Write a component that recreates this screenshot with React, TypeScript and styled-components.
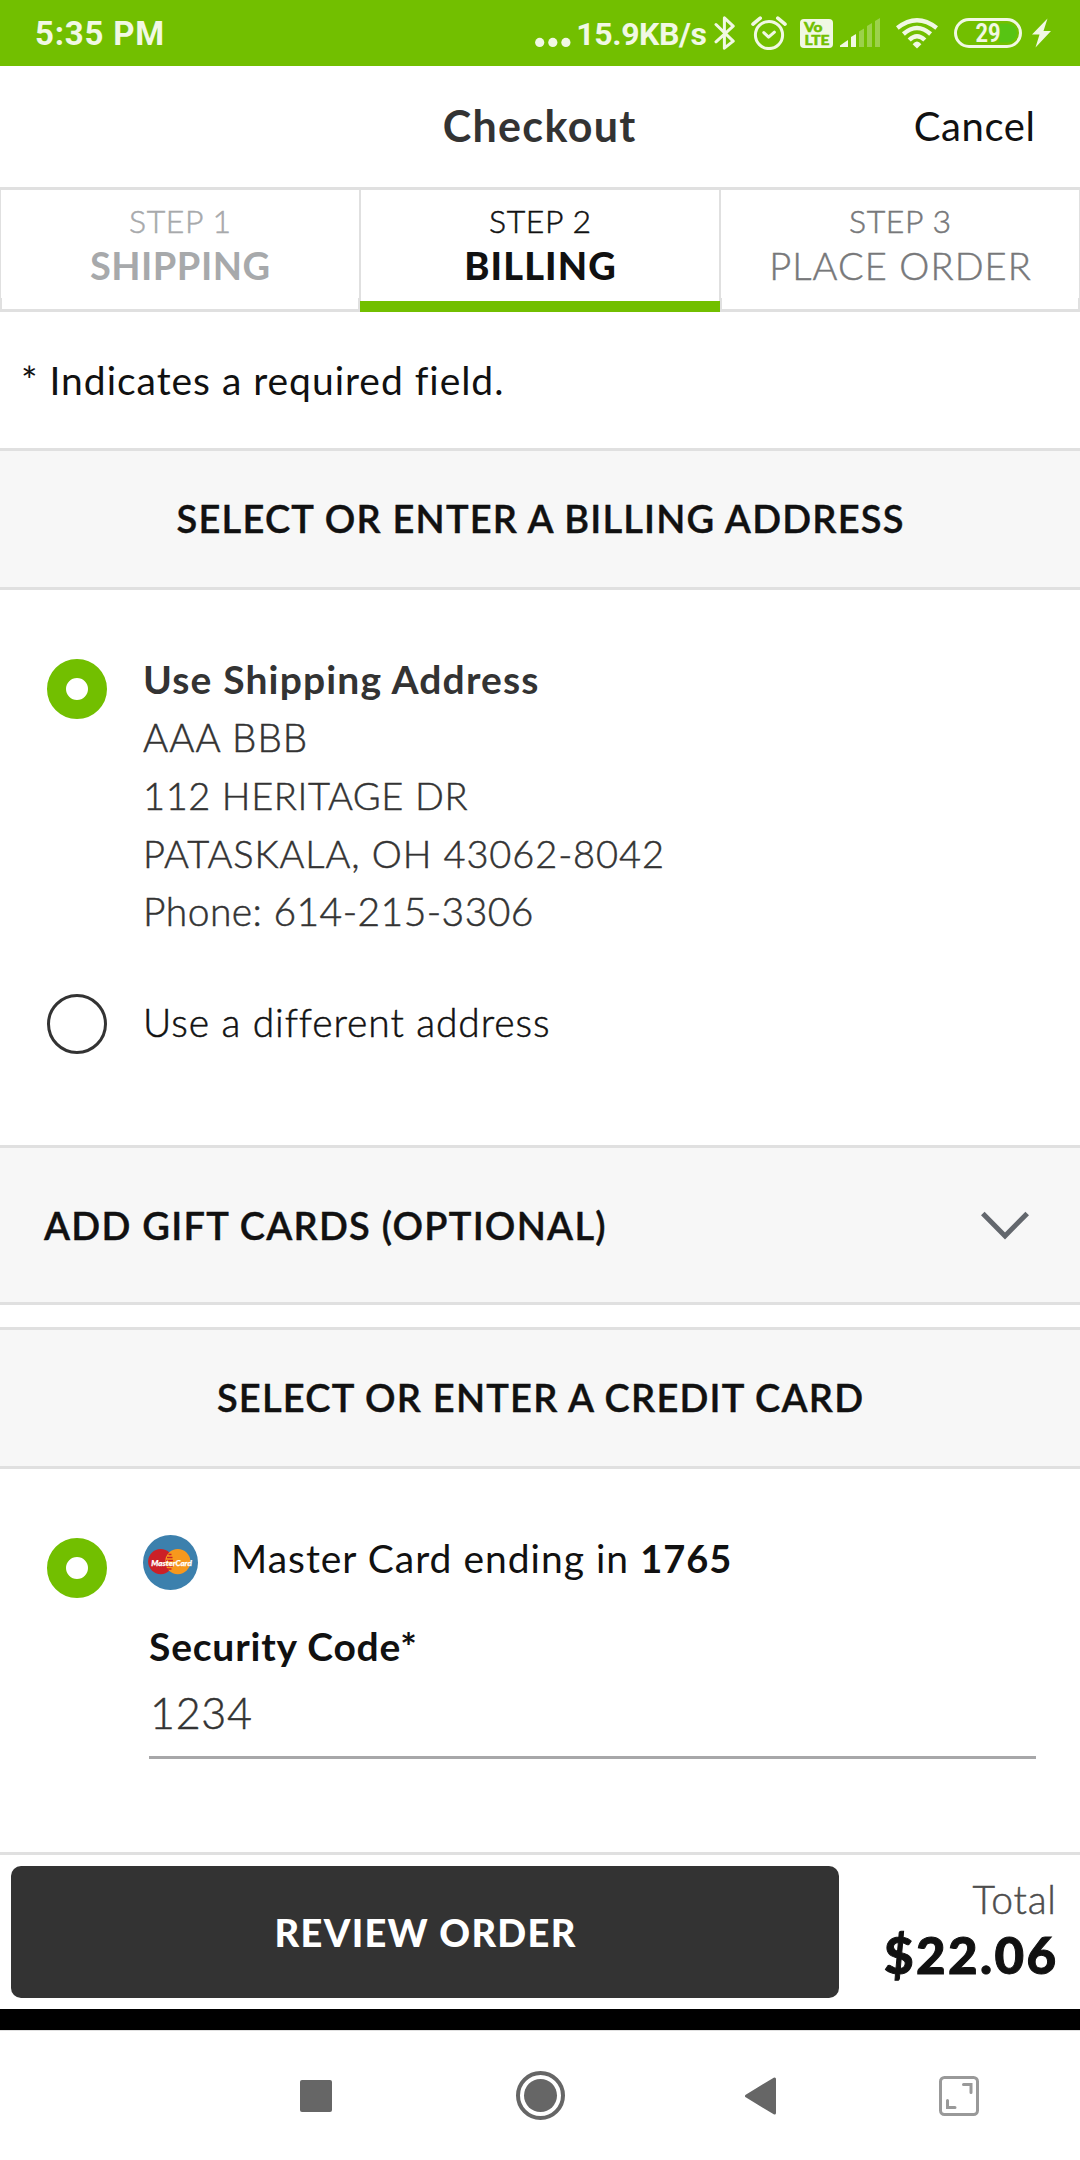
import React from "react";
import styled, { createGlobalStyle, css } from "styled-components";

const green = "#72bf00";
const ink = "#111111";
const charcoal = "#333333";
const rule = "#e0e0e0";
const statusInk = "#f1f8e4";

const GlobalStyle = createGlobalStyle`
  * { box-sizing: border-box; }
  body { margin: 0; background: #fff; }
  svg { display: block; flex: none; }
`;

const Screen = styled.div`
  width: 1080px;
  height: 2160px;
  display: flex;
  flex-direction: column;
  overflow: hidden;
  background: #fff;
  color: ${ink};
  font-family: Lato, "Open Sans", sans-serif;
`;

type LabelProps = {
  $size?: number;
  $weight?: number;
  $track?: number;
  $color?: string;
  $line?: number;
};

/* The light cut is very fine at these sizes, so it gets a hairline stroke. */
const Label = styled.span<LabelProps>`
  display: block;
  flex: none;
  white-space: nowrap;
  font-size: ${(p) => p.$size ?? 38}px;
  font-weight: ${(p) => p.$weight ?? 400};
  letter-spacing: ${(p) => p.$track ?? 0}px;
  margin-right: ${(p) => -(p.$track ?? 0)}px;
  line-height: ${(p) => p.$line ?? 48}px;
  color: ${(p) => p.$color ?? "inherit"};
  ${(p) =>
    p.$weight === 300 &&
    css`
      -webkit-text-stroke: 0.5px currentColor;
    `}
`;

/* Status bar */
const StatusBar = styled.header`
  flex: none;
  height: 66px;
  padding: 0 29px 0 35px;
  display: flex;
  align-items: center;
  justify-content: space-between;
  background: ${green};
  color: ${statusInk};
`;

const StatusText = styled(Label)`
  padding-top: 2px;
  font-family: Roboto, sans-serif;
`;

const StatusIcons = styled.div`
  display: flex;
  align-items: center;
`;

const NetSpeed = styled(StatusText)`
  margin-left: 5px;
`;

const StatusIcon = styled.svg<{ $gap?: number }>`
  margin-left: ${(p) => p.$gap ?? 0}px;
  fill: none;
  stroke: none;
`;

/* Title bar */
const TitleBar = styled.div`
  flex: none;
  height: 121px;
  padding: 0 45px 2px 43px;
  display: grid;
  grid-template-columns: 1fr auto 1fr;
  align-items: center;
`;

const CancelLink = styled(Label)`
  grid-column: 3;
  justify-self: end;
`;

const Title = styled(Label)`
  grid-column: 2;
`;

/* Steps */
const Steps = styled.nav`
  flex: none;
  height: 125px;
  display: grid;
  grid-template-columns: repeat(3, 1fr);
  border-top: 3px solid ${rule};
`;

const Step = styled.div<{ $active?: boolean; $color: string }>`
  position: relative;
  display: flex;
  flex-direction: column;
  align-items: center;
  padding-top: 11px;
  border: solid ${rule};
  border-width: 0 1px;
  color: ${(p) => p.$color};

  &::after {
    content: "";
    position: absolute;
    left: -1px;
    right: -1px;
    bottom: 0;
    height: 11px;
    ${(p) =>
      p.$active
        ? css`
            background: ${green};
          `
        : css`
            border: solid ${rule};
            border-width: 0 2px 3px;
          `}
  }
`;

const Note = styled.div`
  flex: none;
  height: 136px;
  padding: 0 21px 1px;
  display: flex;
  align-items: center;
`;

/* Section headings */
const SectionHead = styled.div`
  flex: none;
  height: 142px;
  padding-bottom: 2px;
  display: flex;
  align-items: center;
  justify-content: center;
  background: #f7f7f7;
  border: solid ${rule};
  border-width: 3px 0;
`;

const HeadText = styled(Label)`
  -webkit-text-stroke: 0.4px currentColor;
`;

const Accordion = styled(SectionHead)`
  height: 160px;
  margin-bottom: 22px;
  padding: 0 51px 1px 44px;
  justify-content: space-between;
`;

const Chevron = styled.svg`
  margin-top: 2px;
`;

/* Options */
const Options = styled.section<{ $height: number }>`
  flex: none;
  height: ${(p) => p.$height}px;
  padding: 60px 44px 0 47px;
`;

const Option = styled.div<{ $top?: number }>`
  display: flex;
  align-items: flex-start;
  margin-top: ${(p) => p.$top ?? 0}px;
`;

const Radio = styled.span<{ $checked?: boolean; $top: number }>`
  flex: none;
  width: 60px;
  height: 60px;
  margin: ${(p) => p.$top}px 36px 0 0;
  border-radius: 50%;
  background: #fff;
  border: ${(p) => (p.$checked ? `19px solid ${green}` : `3px solid ${charcoal}`)};
`;

const Lines = styled.div`
  display: flex;
  flex-direction: column;
`;

const CardLogo = styled.svg`
  margin: 6px 33px 0 0;
`;

const CardEnding = styled(Label)`
  margin-left: 12px;
`;

const Field = styled.div`
  display: flex;
  flex-direction: column;
  margin: 24px 0 0 102px;
`;

const FieldValue = styled.div`
  height: 76px;
  margin-top: 13px;
  padding-left: 1px;
  border-bottom: 3px solid #a7a7a9;
`;

/* Footer */
const Footer = styled.footer`
  flex: none;
  height: 157px;
  padding: 11px 24px 11px 11px;
  display: flex;
  justify-content: space-between;
  border-top: 3px solid ${rule};
`;

const ReviewButton = styled.button`
  width: 828px;
  height: 132px;
  padding: 0;
  display: flex;
  align-items: center;
  justify-content: center;
  border: 0;
  border-radius: 10px;
  background: ${charcoal};
  color: #fff;
  font-family: inherit;
`;

const Totals = styled.div`
  display: flex;
  flex-direction: column;
  align-items: flex-end;
  padding-top: 10px;
`;

const Amount = styled(Label)`
  padding-top: 3px;
  -webkit-text-stroke: 1px currentColor;
`;

const BlackStrip = styled.div`
  flex: none;
  height: 21px;
  background: #000;
`;

const NavBar = styled.nav`
  flex: 1;
  display: flex;
  align-items: center;
  padding-left: 300px;
  border-top: 1px solid ${rule};
`;

const NavIcon = styled.svg<{ $gap?: number }>`
  margin-left: ${(p) => p.$gap ?? 0}px;
`;

const address: { text: string; size: number; track: number }[] = [
  { text: "AAA BBB", size: 38.5, track: 1.05 },
  { text: "112 HERITAGE DR", size: 38, track: 0.6 },
  { text: "PATASKALA, OH 43062-8042", size: 38, track: 0.9 },
  { text: "Phone: 614-215-3306", size: 39, track: 0.45 },
];

function Status() {
  return (
    <StatusBar>
      <StatusText $size={33} $weight={700} $track={0.8}>5:35 PM</StatusText>
      <StatusIcons>
        <StatusIcon width="36" height="34" viewBox="535.5 16 36 34">
          <g fill={statusInk}>
            <circle cx="540.2" cy="42.4" r="4.6" />
            <circle cx="553.3" cy="42.4" r="4.6" />
            <circle cx="566.4" cy="42.4" r="4.6" />
          </g>
        </StatusIcon>
        <NetSpeed $size={32} $weight={700} $track={-0.4}>15.9KB/s</NetSpeed>
        <StatusIcon $gap={7} width="21" height="34" viewBox="714 16 21 34">
          <path d="M716 24.5L733.2 41.2L724.4 48.2V17.8L733.2 26.2L716 41.8" stroke={statusInk} strokeWidth="3" strokeLinecap="round" strokeLinejoin="round" />
        </StatusIcon>
        <StatusIcon $gap={16} width="36" height="34" viewBox="751 16 36 34">
          <g stroke={statusInk} strokeWidth="3" strokeLinecap="round" strokeLinejoin="round">
            <circle cx="769" cy="35" r="13.6" />
            <path d="M763.8 32.6L768.6 37.2L774.4 32.2" />
            <path d="M753 24.2L760.2 18.2M785 24.2L777.8 18.2" strokeWidth="3.6" />
          </g>
        </StatusIcon>
        <StatusIcon $gap={13} width="33" height="34" viewBox="800 16 33 34">
          <rect x="800" y="19" width="33" height="29" rx="4" fill={statusInk} />
          <g fill={green} stroke={green} strokeWidth="0.5" fontFamily="Lato, sans-serif" fontWeight="900">
            <text x="804" y="31.8" fontSize="13.5" textLength="18.5" lengthAdjust="spacingAndGlyphs">Vo</text>
            <text x="804.5" y="44.6" fontSize="13.5" textLength="25" lengthAdjust="spacingAndGlyphs">LTE</text>
          </g>
        </StatusIcon>
        <StatusIcon $gap={7} width="40" height="34" viewBox="840 16 40 34">
          <g fill={statusInk}>
            <path d="M840 47V45.5L848 40V47Z" />
            <path d="M851 47V37L856 34V47Z" />
            <g opacity="0.33">
              <path d="M859 47V31.5L864 28.5V47Z" />
              <path d="M867 47V26L872 23V47Z" />
              <path d="M875 47V21L880 18V47Z" />
            </g>
          </g>
        </StatusIcon>
        <StatusIcon $gap={16} width="42" height="34" viewBox="896 16 42 34">
          <g stroke={statusInk} strokeWidth="4.4">
            <path d="M897.3 28Q917 12.4 936.7 28" />
            <path d="M903.4 34Q917 22 930.6 34" />
            <path d="M909.2 40Q917 32.4 924.8 40" />
          </g>
          <path d="M912.6 44.2Q917 39 921.4 44.2L917 48.4Z" fill={statusInk} />
        </StatusIcon>
        <StatusIcon $gap={16} width="68" height="34" viewBox="954 16 68 34">
          <path d="M999 23.5H1007.5A9.5 9.5 0 0 1 1007.5 42.5H999Z" fill="#57c413" />
          <rect x="955.5" y="19.5" width="65" height="27" rx="13.5" stroke={statusInk} strokeWidth="3" />
          <text x="975.5" y="42" fontSize="25" fontWeight="700" fontFamily="Roboto, sans-serif" fill={statusInk} textLength="25" lengthAdjust="spacingAndGlyphs">29</text>
        </StatusIcon>
        <StatusIcon $gap={10} width="19" height="34" viewBox="1032 16 19 34">
          <path d="M1047.5 18.5L1032 34.5H1039.5L1035.5 47.5L1051 31H1043.5Z" fill={statusInk} />
        </StatusIcon>
      </StatusIcons>
    </StatusBar>
  );
}

function MasterCardLogo() {
  return (
    <CardLogo width="55" height="55" viewBox="0 0 55 55">
      <circle cx="27.5" cy="27.5" r="27.5" fill="#3c80ad" />
      <circle cx="17.7" cy="26.6" r="12.6" fill="#cc2027" />
      <circle cx="34.8" cy="26.6" r="12.6" fill="#f7981d" />
      <path d="M25.5 19.5H28.5M24 22.5H29.5M23 25.5H30M23 31H30M24 34H28.5" stroke="#cc2027" strokeWidth="1.3" />
      <text x="8.3" y="30.8" fontSize="8.2" fontWeight="900" fontStyle="italic" fontFamily="Lato, sans-serif" fill="#fff" stroke="#fff" strokeWidth="0.25" textLength="40.5" lengthAdjust="spacingAndGlyphs">MasterCard</text>
    </CardLogo>
  );
}

export default function App() {
  return (
    <Screen>
      <GlobalStyle />
      <Status />
      <TitleBar>
        <Title $size={43} $weight={700} $track={1.35} $color={charcoal}>Checkout</Title>
        <CancelLink $size={40} $track={0.6}>Cancel</CancelLink>
      </TitleBar>
      <Steps>
        <Step $color="#a7a9ab">
          <Label $size={32} $weight={300} $track={0.6} $line={40}>STEP 1</Label>
          <Label $weight={700} $track={0.5}>SHIPPING</Label>
        </Step>
        <Step $active $color={ink}>
          <Label $size={32} $weight={300} $track={0.6} $line={40}>STEP 2</Label>
          <Label $weight={900} $track={1.12}>BILLING</Label>
        </Step>
        <Step $color="#77787a">
          <Label $size={32} $weight={300} $track={0.6} $line={40}>STEP 3</Label>
          <Label $weight={300} $track={1.1}>PLACE ORDER</Label>
        </Step>
      </Steps>
      <Note>
        <Label $size={39} $track={0.97}>* Indicates a required field.</Label>
      </Note>

      <SectionHead>
        <HeadText $weight={600} $track={1.2}>SELECT OR ENTER A BILLING ADDRESS</HeadText>
      </SectionHead>
      <Options $height={555}>
        <Option>
          <Radio $checked $top={9} />
          <Lines>
            <Label $size={39} $weight={700} $track={1.15} $line={58} $color={charcoal}>Use Shipping Address</Label>
            {address.map((a) => (
              <Label key={a.text} $size={a.size} $weight={300} $track={a.track} $line={58} $color={charcoal}>{a.text}</Label>
            ))}
          </Lines>
        </Option>
        <Option $top={53}>
          <Radio $top={1} />
          <Label $size={39} $weight={300} $track={0.9} $line={58}>Use a different address</Label>
        </Option>
      </Options>

      <Accordion>
        <HeadText $weight={600} $track={1.25}>ADD GIFT CARDS (OPTIONAL)</HeadText>
        <Chevron width="48" height="30" viewBox="0 0 48 30">
          <path d="M1.8 2.4L24 25L46.2 2.4" fill="none" stroke="#63676d" strokeWidth="5" />
        </Chevron>
      </Accordion>

      <SectionHead>
        <HeadText $weight={600} $track={1.2}>SELECT OR ENTER A CREDIT CARD</HeadText>
      </SectionHead>
      <Options $height={383}>
        <Option>
          <Radio $checked $top={9} />
          <MasterCardLogo />
          <Label $size={39} $track={1} $line={58}>Master Card ending in</Label>
          <CardEnding $weight={700} $track={0.96} $line={58}>1765</CardEnding>
        </Option>
        <Field>
          <Label $size={39} $weight={700} $track={0.8}>Security Code*</Label>
          <FieldValue>
            <Label $size={43} $weight={300} $track={0.73} $line={60} $color={charcoal}>1234</Label>
          </FieldValue>
        </Field>
      </Options>

      <Footer>
        <ReviewButton>
          <Label $weight={900} $track={1.3}>REVIEW ORDER</Label>
        </ReviewButton>
        <Totals>
          <Label $size={39} $weight={300} $track={0.85} $line={46} $color="#4d4d4d">Total</Label>
          <Amount $size={51} $weight={900} $track={2.4} $line={60}>$22.06</Amount>
        </Totals>
      </Footer>
      <BlackStrip />
      <NavBar>
        <NavIcon width="32" height="32" viewBox="0 0 32 32">
          <rect width="32" height="32" rx="2" fill="#666" />
        </NavIcon>
        <NavIcon $gap={184} width="49" height="49" viewBox="0 0 49 49">
          <circle cx="24.5" cy="24.5" r="22.5" fill="none" stroke="#666" strokeWidth="4" />
          <circle cx="24.5" cy="24.5" r="16.5" fill="#666" />
        </NavIcon>
        <NavIcon $gap={180} width="31" height="38" viewBox="0 0 31 38">
          <path d="M1.5 19L29.5 2V36Z" fill="#666" stroke="#666" strokeWidth="3" strokeLinejoin="round" />
        </NavIcon>
        <NavIcon $gap={163} width="40" height="40" viewBox="0 0 40 40">
          <rect x="1.5" y="1.5" width="37" height="37" rx="4" fill="none" stroke="#999" strokeWidth="3" />
          <path d="M24.5 8.5H32V16.5M8.5 24.5V31.5H16" fill="none" stroke="#999" strokeWidth="3" strokeLinecap="round" />
        </NavIcon>
      </NavBar>
    </Screen>
  );
}
